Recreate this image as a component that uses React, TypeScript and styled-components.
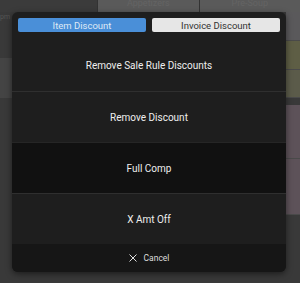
import styled, { createGlobalStyle } from "styled-components";

const GlobalStyle = createGlobalStyle`
  html, body {
    margin: 0;
    padding: 0;
    background: #393939;
    font-family: Roboto, "Liberation Sans", sans-serif;
  }
`;

const Screen = styled.div`
  position: relative;
  width: 300px;
  height: 283px;
  overflow: hidden;
  background: #393939;
  display: grid;
  grid-template-rows: 12px 1fr;
`;

const TopBar = styled.div`
  display: grid;
  grid-template-columns: 97px 1fr 1fr;
  gap: 1px;
  background: #333;
`;

const TopTab = styled.div<{ $light?: boolean }>`
  background: ${(p) => (p.$light ? "#5a5a5a" : "#3b3b3b")};
  color: #646464;
  font-size: 9px;
  text-align: center;
  line-height: 7px;
  overflow: hidden;
`;

const Body = styled.div`
  display: grid;
  grid-template-columns: 1fr 14px;
`;

const LeftPane = styled.div`
  display: flex;
  flex-direction: column;
  color: #555;
  font-size: 7px;
  padding-top: 1px;
`;

const LeftBand = styled.div`
  margin-top: 37px;
  height: 40px;
  width: 12px;
  background: #444;
`;

const RightPane = styled.div`
  display: flex;
  flex-direction: column;
`;

const Card = styled.div<{ $bg: string; $h: number; $gap?: number }>`
  height: ${(p) => p.$h}px;
  background: ${(p) => p.$bg};
  margin-bottom: ${(p) => p.$gap ?? 0}px;
  border-bottom: 1px solid #4a4a4a;
`;

const Modal = styled.div`
  position: absolute;
  left: 12px;
  top: 12px;
  width: 274px;
  height: 260px;
  background: #1e1e1e;
  border-radius: 6px;
  overflow: hidden;
  box-shadow: 0 2px 6px rgba(0, 0, 0, 0.5);
  display: flex;
  flex-direction: column;
`;

const TabRow = styled.div`
  height: 28px;
  display: grid;
  grid-template-columns: 1fr 1fr;
  gap: 6px;
  padding: 6px 6px 8px;
  box-sizing: border-box;
`;

const TabButton = styled.button<{ $active?: boolean }>`
  border: none;
  border-radius: 2px;
  padding: 0;
  font-family: inherit;
  font-size: 9.5px;
  background: ${(p) => (p.$active ? "#4a8fd8" : "#e6e6e6")};
  color: ${(p) => (p.$active ? "#dfe9f5" : "#333")};
`;

const Option = styled.button<{ $dark?: boolean }>`
  height: 51px;
  border: none;
  border-top: 1px solid ${(p) => (p.$dark ? "#262626" : "#2f2f2f")};
  background: ${(p) => (p.$dark ? "#111111" : "#1e1e1e")};
  color: #eeeeee;
  font-family: inherit;
  font-size: 10px;
  padding: 0;
  &:first-of-type {
    border-top: none;
  }
`;

const Footer = styled.button`
  flex: 1;
  border: none;
  background: #161616;
  color: #dddddd;
  font-family: inherit;
  font-size: 8.5px;
  display: flex;
  align-items: center;
  justify-content: center;
  gap: 7px;
  padding: 0;
`;

export default function App() {
  return (
    <>
      <GlobalStyle />
      <Screen>
        <TopBar>
          <TopTab />
          <TopTab $light>Appetizers</TopTab>
          <TopTab $light>Pre-Soup</TopTab>
        </TopBar>
        <Body>
          <LeftPane>
            <span>pm</span>
            <LeftBand />
          </LeftPane>
          <RightPane>
            <Card $bg="#5a595b" $h={28} />
            <Card $bg="#5e5e45" $h={28} />
            <Card $bg="#5b5b4a" $h={27} $gap={7} />
            <Card $bg="#5d5259" $h={53} />
            <Card $bg="#5d5259" $h={55} />
          </RightPane>
        </Body>
        <Modal>
          <TabRow>
            <TabButton $active>Item Discount</TabButton>
            <TabButton>Invoice Discount</TabButton>
          </TabRow>
          <Option>Remove Sale Rule Discounts</Option>
          <Option>Remove Discount</Option>
          <Option $dark>Full Comp</Option>
          <Option>X Amt Off</Option>
          <Footer>
            <svg width="8" height="8" viewBox="0 0 8 8">
              <path d="M0.5 0.5L7.5 7.5M7.5 0.5L0.5 7.5" stroke="#ddd" strokeWidth="1" />
            </svg>
            Cancel
          </Footer>
        </Modal>
      </Screen>
    </>
  );
}
